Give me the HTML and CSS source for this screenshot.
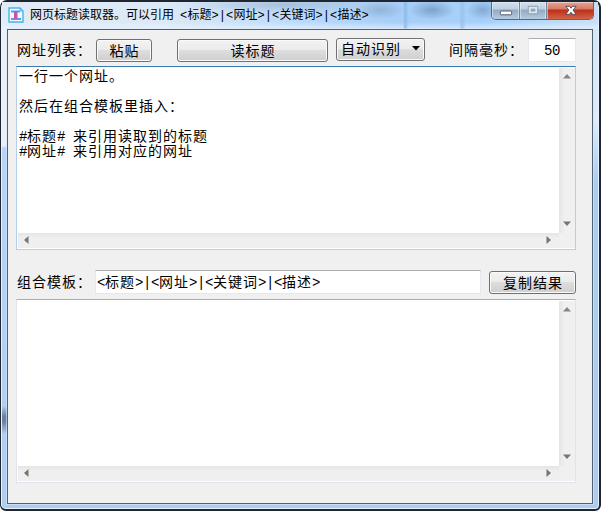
FILE: index.html
```html
<!DOCTYPE html>
<html lang="zh-CN">
<head>
<meta charset="utf-8">
<title>网页标题读取器</title>
<link rel="stylesheet" href="styles.css">
</head>
<body>
<div class="window">
  <header class="titlebar">
    <svg class="app-icon" width="16" height="16" viewBox="0 0 16 16">
      <path d="M1 1H12L15 4V15H1Z" fill="#eefaff" stroke="#48b4ec" stroke-width="1.4"/>
      <path d="M12 1V4H15" fill="none" stroke="#48b4ec"/>
      <path d="M3 3.5H12V5.500H3ZM3 11H13V13H3Z" fill="#3aaee8"/>
      <path d="M6 4H9.5V12H6Z" fill="#d050b0"/>
    </svg>
    <h1 class="title">网页标题读取器。可以引用<span class="lat space"> </span><span class="lat">&lt;</span>标题<span class="lat">&gt;|&lt;</span>网址<span class="lat">&gt;|&lt;</span>关键词<span class="lat">&gt;|&lt;</span>描述<span class="lat">&gt;</span></h1>
    <div class="controls">
      <svg class="control" width="28" height="18" viewBox="0 0 28 18"><rect x="8.5" y="8.500" width="12" height="4" rx="1" fill="#fff" stroke="#4c566a"/></svg>
      <svg class="control" width="27" height="18" viewBox="0 0 27 18"><path fill-rule="evenodd" d="M8.5 3.5H18.5V11.5H8.5ZM11.500 6.500V8.500H15.500V6.500Z" fill="#dce6ef" stroke="#8c9bac"/></svg>
      <svg class="control close" width="47" height="18" viewBox="0 0 47 18"><path d="M18.500 3.500H22.500L24 5.500L25.500 3.500H29.500L26.200 7.500L29.500 12H25.500L24 9.800L22.500 12H18.500L21.800 7.500Z" fill="#fff" stroke="#4e4b5b"/></svg>
    </div>
  </header>
  <main class="client">
    <div class="toolbar">
      <span class="label">网址列表：</span>
      <button class="button paste">粘贴</button>
      <button class="button read">读标题</button>
      <button class="button select">自动识别<svg width="8" height="5" viewBox="0 0 8 5"><path d="M0 0H8L4 4.500Z" fill="#000"/></svg></button>
      <span class="label delay-label">间隔毫秒：</span>
      <div class="field delay"><span class="lat">50</span></div>
    </div>
    <section class="editor focused">
      <div class="text"><p>一行一个网址。</p><p></p><p>然后在组合模板里插入：</p><p></p><p><span class="lat">#</span>标题<span class="lat"># </span>来引用读取到的标题</p><p><span class="lat">#</span>网址<span class="lat"># </span>来引用对应的网址</p></div>
      <div class="vscroll">
        <svg width="8" height="5" viewBox="0 0 8 5"><path d="M0 4.500L4 0L8 4.500Z" fill="#858585"/></svg>
        <svg width="8" height="5" viewBox="0 0 8 5"><path d="M0 .5H8L4 5Z" fill="#757575"/></svg>
      </div>
      <div class="hscroll">
        <svg width="5" height="8" viewBox="0 0 5 8"><path d="M4.500 0V8L0 4Z" fill="#757575"/></svg>
        <svg width="5" height="8" viewBox="0 0 5 8"><path d="M.5 0V8L5 4Z" fill="#757575"/></svg>
      </div>
      <div class="corner"></div>
    </section>
    <div class="template">
      <span class="label">组合模板：</span>
      <div class="field pattern"><span class="lat">&lt;</span>标题<span class="lat">&gt;|&lt;</span>网址<span class="lat">&gt;|&lt;</span>关键词<span class="lat">&gt;|&lt;</span>描述<span class="lat">&gt;</span></div>
      <button class="button copy">复制结果</button>
    </div>
    <section class="editor">
      <div class="text"></div>
      <div class="vscroll">
        <svg width="8" height="5" viewBox="0 0 8 5"><path d="M0 4.500L4 0L8 4.500Z" fill="#858585"/></svg>
        <svg width="8" height="5" viewBox="0 0 8 5"><path d="M0 .5H8L4 5Z" fill="#757575"/></svg>
      </div>
      <div class="hscroll">
        <svg width="5" height="8" viewBox="0 0 5 8"><path d="M4.500 0V8L0 4Z" fill="#757575"/></svg>
        <svg width="5" height="8" viewBox="0 0 5 8"><path d="M.5 0V8L5 4Z" fill="#757575"/></svg>
      </div>
      <div class="corner"></div>
    </section>
  </main>
</div>
</body>
</html>
```
FILE: styles.css
```css
* { box-sizing: border-box; }
body {
  margin: 0;
  background: #fff;
  color: #000;
  font: 14px/15px "Noto Sans CJK SC", sans-serif;
  letter-spacing: 1px;
}
.window {
  width: 601px;
  height: 511px;
  padding: 0 6px 6px;
  border: 1px solid #202631;
  border-width: 2px 2px 2px 1px;
  border-radius: 7px 7px 6px 6px;
  box-shadow: inset 0 0 0 1px #e4f3ff;
  background:
    linear-gradient(transparent 404px, #6c83a0 414px, #6c83a0 420px, transparent 432px) 0 0 / 6px 100% no-repeat,
    linear-gradient(#e8f0f9 0 144px, #b4d4fa 146px, #aecdf0) 0 0 / 7px 100% no-repeat,
    linear-gradient(#d2e5f7, #dcecfa 120px, #a9cdf4 180px, #aecbed);
}
.titlebar {
  display: flex;
  height: 27px;
  margin: 0 -5px;
  padding: 0 5px 0 6px;
  background:
    radial-gradient(ellipse 25px 9px at 378px 8px, #86a5c4aa, transparent),
    radial-gradient(ellipse 23px 10px at 430px 8px, #7193bac0, transparent),
    radial-gradient(ellipse 17px 10px at 481px 8px, #7193baa0, transparent),
    radial-gradient(ellipse 100px 8px at 280px 3px, #9aafc499, transparent),
    linear-gradient(90deg, transparent 401px, #8dbbe9 403px, transparent 407px, transparent 457px, #9bc4eb 460px, transparent 464px),
    linear-gradient(transparent 20px, #eaf5ffb0),
    linear-gradient(90deg, #e1ebf7, #dce9f5 160px, #bbdafa 300px, #a8cef8 390px, #a6d0fa 480px, #c8e0f5);
}
.app-icon { flex: none; margin-top: 5px; }
.title {
  flex: 1;
  margin: 4px 0 0 6px;
  font-size: 12px;
  line-height: 16px;
  font-weight: 400;
  letter-spacing: 0;
  white-space: nowrap;
}
.lat {
  font-family: "Liberation Mono", monospace;
  font-size: 14px;
  letter-spacing: -.4px;
  white-space: pre;
}
.title .lat { font-size: 12px; letter-spacing: .13px; }
.title .space { letter-spacing: -1.200px; }
.controls {
  display: flex;
  height: 18px;
  width: 103px;
  margin-right: -1px;
  flex: none;
  border: 1px solid #59677b;
  border-top: 0;
  border-radius: 0 0 5px 5px;
  overflow: hidden;
}
.control {
  flex: none;
  background: linear-gradient(#d3e0ed, #bed0e2 7px, #94aac3 8px, #b9cfe4);
  border-right: 1px solid #77869b;
  box-shadow: inset 0 0 0 1px #eaf4ff88;
}
.close {
  border: 0;
  background: linear-gradient(#e8a394, #d77967 7px, #bc2f18 8px, #d5684c);
}
.control { padding-top: 1px; height: 18px; }
.client {
  height: 475px;
  padding: 8px 16px 0 8px;
  border: 1px solid #526072;
  background: #f0f0f0;
  box-shadow: 0 0 0 1px #d8eaff99;
}
.toolbar { display: flex; height: 28px; align-items: flex-start; }
.label { width: 80px; flex: none; padding: 4px 0 0 1px; white-space: nowrap; }
.button {
  display: flex;
  justify-content: center;
  align-items: center;
  height: 23px;
  padding: 0 0 1px 1px;
  flex: none;
  border: 1px solid #707070;
  border-radius: 3px;
  background: linear-gradient(#f2f2f2, #ebebeb 48%, #dddddd 50%, #cfcfcf);
  box-shadow: inset 0 0 0 1px #fafafa;
  font: inherit;
  letter-spacing: inherit;
  color: #000;
}
.paste { width: 56px; margin: 1px 25px 0 0; }
.read { width: 151px; margin: 1px 8px 0 0; }
.select { width: 89px; justify-content: space-between; padding: 0 4px 2px; }
.delay-label { margin-left: 23px; }
.field {
  height: 24px;
  padding: 3px 0 0 2px;
  border: 1px solid #e3e9ef;
  border-top-color: #abadb3;
  background: #fff;
  white-space: nowrap;
}
.delay { width: 48px; padding-left: 0; text-align: center; }
.editor {
  display: grid;
  grid-template: 165px 15px / 541px 16px;
  width: 560px;
  height: 184px;
  padding: 1px;
  border: 1px solid #e2e3ea;
  border-top-color: #abadb3;
  background: #fff;
}
.focused {
  border-color: #b5cfe7;
  border-top-color: #3d7bad;
}
.text { padding: 0 0 0 1px; white-space: nowrap; }
.text p { height: 15px; margin: 0; }
.vscroll, .hscroll {
  display: flex;
  justify-content: space-between;
  align-items: center;
}
.vscroll {
  flex-direction: column;
  padding: 6px 0 7px;
  background: linear-gradient(90deg, #e5e5e5, #f0f0f0 35%);
}
.hscroll {
  padding: 0 8px 2px 6px;
  background: linear-gradient(#e5e5e5, #efefef 35%);
}
.corner { background: #f0f0f0; }
.template { display: flex; height: 49px; padding-top: 20px; }
.template .label { width: 79px; }
.pattern { width: 386px; margin-right: 8px; padding-left: 1px; }
.copy { width: 87px; margin-top: 1px; }
```
